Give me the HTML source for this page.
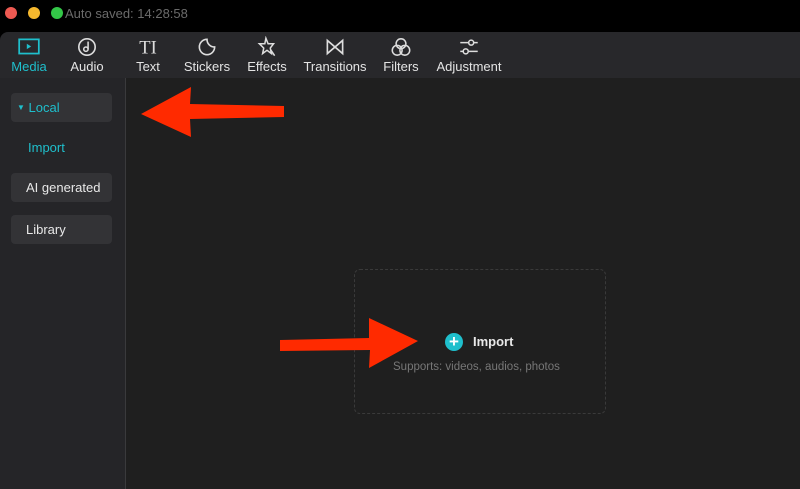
<!DOCTYPE html>
<html><head><meta charset="utf-8"><style>
body{margin:0;width:800px;height:489px;background:#000;font-family:"Liberation Sans",sans-serif;position:relative;overflow:hidden}
.dot{position:absolute;top:7px;width:12px;height:12px;border-radius:50%}
.tb{position:absolute;left:0;top:32px;width:800px;height:46px;background:#28282b;border-top-left-radius:8px}
.it{position:absolute;top:0;width:70px;text-align:center;color:#e4e4e4;font-size:13px}
.it svg{display:block;margin:4px auto 1px;height:22px;width:24px}
.side{position:absolute;left:0;top:78px;width:125px;height:411px;background:#252528;border-right:1px solid #3a3a3c}
.main{position:absolute;left:126px;top:78px;width:674px;height:411px;background:#1f1f1f}
.btn{position:absolute;left:11px;width:101px;height:29px;background:#333336;border-radius:4px;color:#e8e8e8;font-size:13px;line-height:29px;box-sizing:border-box;padding-left:15px}
</style></head><body>
<div class="dot" style="left:5px;background:#ee5a52"></div>
<div class="dot" style="left:28px;background:#f5b82e"></div>
<div class="dot" style="left:51px;background:#33c748"></div>
<div style="position:absolute;left:65px;top:6px;color:#6b6b6b;font-size:13px">Auto saved: 14:28:58</div>
<div class="tb">
<div class="it" style="left:-6px;color:#1fbfcc"><svg viewBox="0 0 22 20"><rect x="2" y="3" width="18" height="13" fill="none" stroke="#1fbfcc" stroke-width="1.6"/><path d="M9 7v5l4-2.5z" fill="#1fbfcc"/></svg>Media</div>
<div class="it" style="left:52px"><svg viewBox="0 0 22 20"><circle cx="11" cy="10" r="7.5" fill="none" stroke="#ddd" stroke-width="1.5"/><circle cx="10" cy="12" r="2" fill="none" stroke="#ddd" stroke-width="1.4"/><path d="M12 12V5" stroke="#ddd" stroke-width="1.4"/></svg>Audio</div>
<div class="it" style="left:113px"><svg viewBox="0 0 22 20"><text x="11" y="16" text-anchor="middle" fill="#ddd" font-family="Liberation Serif" font-size="17">TI</text></svg>Text</div>
<div class="it" style="left:172px"><svg viewBox="0 0 22 20"><path d="M18 10a7 7 0 1 1-7-7c0 4 3 7 7 7z" fill="none" stroke="#ddd" stroke-width="1.5"/></svg>Stickers</div>
<div class="it" style="left:232px"><svg viewBox="0 0 22 20"><path d="M10 2l2 5 5 0-3 4 1 5-4-3-4 3 1-5-4-4 5 0z M14 12l4 6" fill="none" stroke="#ddd" stroke-width="1.4"/></svg>Effects</div>
<div class="it" style="left:299px;width:72px"><svg viewBox="0 0 22 20"><path d="M4 4v12l14-12v12z" fill="none" stroke="#ddd" stroke-width="1.5"/></svg>Transitions</div>
<div class="it" style="left:366px"><svg viewBox="0 0 22 20"><circle cx="11" cy="7" r="4.5" fill="none" stroke="#ddd" stroke-width="1.4"/><circle cx="7.5" cy="13" r="4.5" fill="none" stroke="#ddd" stroke-width="1.4"/><circle cx="14.5" cy="13" r="4.5" fill="none" stroke="#ddd" stroke-width="1.4"/></svg>Filters</div>
<div class="it" style="left:434px"><svg viewBox="0 0 22 20"><path d="M3 6h16M3 14h16" stroke="#ddd" stroke-width="1.4"/><circle cx="13" cy="6" r="2.3" fill="#28282b" stroke="#ddd" stroke-width="1.4"/><circle cx="8" cy="14" r="2.3" fill="#28282b" stroke="#ddd" stroke-width="1.4"/></svg>Adjustment</div>
</div>
<div class="side">
<div class="btn" style="top:15px;color:#1fbfcc;padding-left:6px"><span style="font-size:8px;vertical-align:2px">▼</span> Local</div>
<div style="position:absolute;left:28px;top:62px;color:#1fbfcc;font-size:13px">Import</div>
<div class="btn" style="top:95px">AI generated</div>
<div class="btn" style="top:137px">Library</div>
</div>
<div class="main">
<div style="position:absolute;left:228px;top:191px;width:252px;height:145px;border:1px dashed #3a3a3a;border-radius:6px;box-sizing:border-box"></div>
<div style="position:absolute;left:319px;top:255px;width:18px;height:18px;border-radius:50%;background:#1fbfcc;color:#fff;font-size:17px;line-height:18px;text-align:center;font-weight:bold">+</div>
<div style="position:absolute;left:347px;top:256px;color:#e8e8e8;font-size:13px;font-weight:bold">Import</div>
<div style="position:absolute;left:267px;top:283px;color:#777;font-size:11.5px">Supports: videos, audios, photos</div>
</div>
<svg style="position:absolute;left:0;top:0" width="800" height="489">
<path d="M284 106L190 104L191 87L141 114L191 137L190 119L284 117Z" fill="#ff2a00"/>
<path d="M280 340L369 338L369 318L418 341L369 368L370 350L280 351Z" fill="#ff2a00"/>
</svg>
</body></html>
